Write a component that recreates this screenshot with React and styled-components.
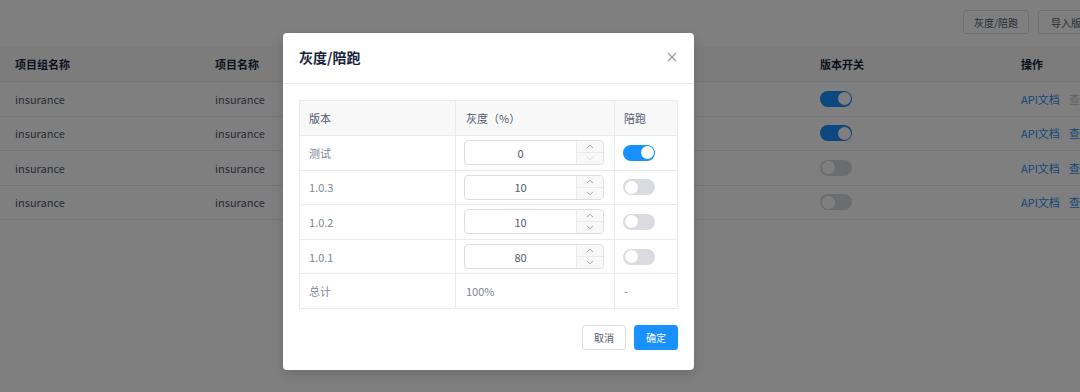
import React from "react";
import styled, { createGlobalStyle } from "styled-components";

const GlobalStyle = createGlobalStyle`
  html, body {
    margin: 0;
    padding: 0;
    background: #fff;
  }
  body {
    font-family: "Noto Sans CJK SC", "Noto Sans", sans-serif;
    -webkit-font-smoothing: antialiased;
  }
`;

const Page = styled.div`
  position: relative;
  width: 1080px;
  height: 392px;
  overflow: hidden;
  background: #fff;
`;

const Toolbar = styled.div`
  display: flex;
  gap: 9px;
  height: 47px;
  padding-top: 10px;
  padding-left: 963px;
  box-sizing: border-box;
  width: 1200px;
`;

const GhostButton = styled.button`
  height: 24px;
  width: 66px;
  padding: 0;
  border: 1px solid #dcdee2;
  border-radius: 3px;
  background: #fff;
  color: #515a6e;
  font-family: inherit;
  font-size: 10px;
  white-space: nowrap;
`;

const ListTable = styled.div`
  width: 1200px;
`;

const ListRow = styled.div`
  display: grid;
  grid-template-columns: 200px 200px 202px 203px 201px 1fr;
  height: ${(p) => (p.$head ? 35 : 34.5)}px;
  align-items: center;
  border-bottom: 1px solid #e8eaec;
  box-sizing: border-box;
  background: ${(p) => (p.$head ? "#f8f8f9" : "#fff")};
  font-size: 11px;
  color: ${(p) => (p.$head ? "#17233d" : "#515a6e")};
  font-weight: ${(p) => (p.$head ? 600 : 400)};
`;

const ListCell = styled.div`
  padding-left: 15px;
  display: flex;
  align-items: center;
  gap: 9px;
  white-space: nowrap;
`;

const Link = styled.span`
  color: ${(p) => (p.$disabled ? "#c5c8ce" : "#2d8cf0")};
`;

const Toggle = styled.span`
  position: relative;
  display: inline-block;
  width: 32px;
  height: 16px;
  border-radius: 8px;
  background: ${(p) => (p.$on ? "#1890ff" : "#d9dbe0")};
  &::after {
    content: "";
    position: absolute;
    top: 1.5px;
    left: ${(p) => (p.$on ? "17.5px" : "1.5px")};
    width: 13px;
    height: 13px;
    border-radius: 50%;
    background: #fff;
  }
`;

const Mask = styled.div`
  position: absolute;
  inset: 0;
  background: rgba(0, 0, 0, 0.5);
`;

const Modal = styled.div`
  position: absolute;
  left: 283px;
  top: 33px;
  width: 411px;
  height: 337px;
  background: #fff;
  border-radius: 4px;
  box-shadow: 0 4px 12px rgba(0, 0, 0, 0.15);
  display: flex;
  flex-direction: column;
`;

const ModalHeader = styled.div`
  height: 51px;
  display: flex;
  align-items: center;
  justify-content: space-between;
  padding: 0 17px 2px 16px;
  border-bottom: 1px solid #e8eaec;
  box-sizing: border-box;
`;

const Title = styled.div`
  font-size: 14px;
  font-weight: 600;
  color: #17233d;
`;

const ModalBody = styled.div`
  padding: 16px 16px 0;
`;

const Grid = styled.div`
  border: 1px solid #e8eaec;
  border-bottom: none;
  border-right: none;
`;

const Row = styled.div`
  display: grid;
  grid-template-columns: 156px 159px 1fr;
  height: ${(p) => (p.$head ? 35 : 34.6)}px;
  background: ${(p) => (p.$head ? "#f8f8f9" : "#fff")};
  border-bottom: 1px solid #e8eaec;
  box-sizing: border-box;
  font-size: 11px;
  color: ${(p) => (p.$head ? "#515a6e" : "#808695")};
`;

const Cell = styled.div`
  display: flex;
  align-items: center;
  padding-left: ${(p) => p.$pad || 9}px;
  border-right: 1px solid #e8eaec;
`;

const NumberInput = styled.div`
  display: flex;
  width: 140px;
  height: 25px;
  border: 1px solid #dcdee2;
  border-radius: 4px;
  box-sizing: border-box;
  overflow: hidden;
`;

const NumberValue = styled.div`
  flex: 1;
  display: flex;
  align-items: center;
  justify-content: center;
  color: #515a6e;
  font-size: 11px;
`;

const Handler = styled.div`
  width: 26px;
  display: flex;
  flex-direction: column;
  border-left: 1px solid #e8eaec;
  background: #f8f8f9;
`;

const Step = styled.div`
  flex: 1;
  display: flex;
  align-items: center;
  justify-content: center;
  & + & {
    border-top: 1px solid #e8eaec;
  }
`;

const Footer = styled.div`
  display: flex;
  justify-content: flex-end;
  gap: 8px;
  padding: 16px 16px 0;
`;

const Button = styled.button`
  height: 25px;
  width: 44px;
  padding: 0;
  border-radius: 3px;
  font-family: inherit;
  font-size: 10px;
  border: 1px solid ${(p) => (p.$primary ? "#1890ff" : "#dcdee2")};
  background: ${(p) => (p.$primary ? "#1890ff" : "#fff")};
  color: ${(p) => (p.$primary ? "#fff" : "#515a6e")};
`;

const CloseIcon = () => (
  <svg width="10" height="10" viewBox="0 0 10 10">
    <path d="M1 1L9 9M9 1L1 9" stroke="#999" strokeWidth="1.1" />
  </svg>
);

const Chevron = ({ up, faded }) => (
  <svg width="8" height="5" viewBox="0 0 8 5">
    <path
      d={up ? "M1 4.2L4 1.2L7 4.2" : "M1 0.8L4 3.8L7 0.8"}
      fill="none"
      stroke={faded ? "#d5d7dc" : "#9aa0ab"}
      strokeWidth="1"
    />
  </svg>
);

const list = [
  { on: true, disabled: true },
  { on: true },
  { on: false },
  { on: false },
];

const versions = [
  { name: "测试", value: 0, run: true },
  { name: "1.0.3", value: 10 },
  { name: "1.0.2", value: 10 },
  { name: "1.0.1", value: 80 },
];

export default function App() {
  return (
    <Page>
      <GlobalStyle />
      <Toolbar>
        <GhostButton>灰度/陪跑</GhostButton>
        <GhostButton>导入版本</GhostButton>
      </Toolbar>
      <ListTable>
        <ListRow $head>
          <ListCell>项目组名称</ListCell>
          <ListCell>项目名称</ListCell>
          <ListCell>版本</ListCell>
          <ListCell>描述</ListCell>
          <ListCell>版本开关</ListCell>
          <ListCell>操作</ListCell>
        </ListRow>
        {list.map((r, i) => (
          <ListRow key={i}>
            <ListCell>insurance</ListCell>
            <ListCell>insurance</ListCell>
            <ListCell>1.0.{i}</ListCell>
            <ListCell>-</ListCell>
            <ListCell>
              <Toggle $on={r.on} />
            </ListCell>
            <ListCell>
              <Link>API文档</Link>
              <Link $disabled={r.disabled}>查看</Link>
            </ListCell>
          </ListRow>
        ))}
      </ListTable>

      <Mask />
      <Modal>
        <ModalHeader>
          <Title>灰度/陪跑</Title>
          <CloseIcon />
        </ModalHeader>
        <ModalBody>
          <Grid>
            <Row $head>
              <Cell>版本</Cell>
              <Cell $pad={10}>灰度（%）</Cell>
              <Cell>陪跑</Cell>
            </Row>
            {versions.map((v) => (
              <Row key={v.name}>
                <Cell>{v.name}</Cell>
                <Cell $pad={8}>
                  <NumberInput>
                    <NumberValue>{v.value}</NumberValue>
                    <Handler>
                      <Step>
                        <Chevron up />
                      </Step>
                      <Step>
                        <Chevron faded={v.value === 0} />
                      </Step>
                    </Handler>
                  </NumberInput>
                </Cell>
                <Cell $pad={8}>
                  <Toggle $on={!!v.run} />
                </Cell>
              </Row>
            ))}
            <Row>
              <Cell>总计</Cell>
              <Cell $pad={10}>100%</Cell>
              <Cell>-</Cell>
            </Row>
          </Grid>
        </ModalBody>
        <Footer>
          <Button>取消</Button>
          <Button $primary>确定</Button>
        </Footer>
      </Modal>
    </Page>
  );
}
